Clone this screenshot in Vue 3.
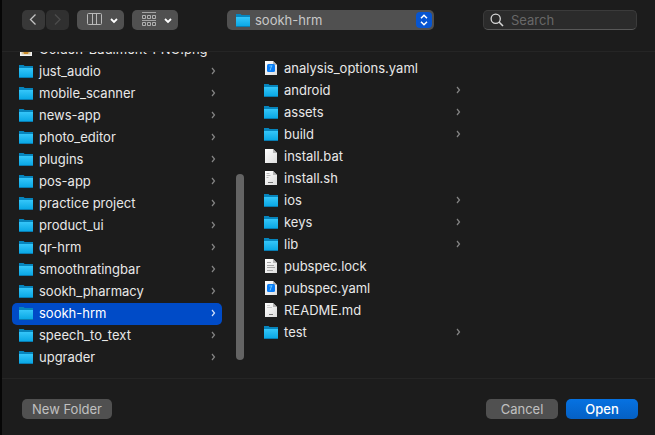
<script setup>
import { ref } from 'vue'

const selected = ref('sookh-hrm')
const query = ref('')
const location = ref('sookh-hrm')

const projects = [
  { name: 'Golden-Badiment-PNG.png', kind: 'image' },
  ...[
    'just_audio', 'mobile_scanner', 'news-app', 'photo_editor', 'plugins', 'pos-app',
    'practice project', 'product_ui', 'qr-hrm', 'smoothratingbar', 'sookh_pharmacy',
    'sookh-hrm', 'speech_to_text', 'upgrader'
  ].map((name) => ({ name, kind: 'folder' }))
]

const contents = [
  { name: 'analysis_options.yaml', kind: 'code' },
  { name: 'android', kind: 'folder' },
  { name: 'assets', kind: 'folder' },
  { name: 'build', kind: 'folder' },
  { name: 'install.bat', kind: 'blank' },
  { name: 'install.sh', kind: 'script' },
  { name: 'ios', kind: 'folder' },
  { name: 'keys', kind: 'folder' },
  { name: 'lib', kind: 'folder' },
  { name: 'pubspec.lock', kind: 'text' },
  { name: 'pubspec.yaml', kind: 'code' },
  { name: 'README.md', kind: 'readme' },
  { name: 'test', kind: 'folder' }
]

const columns = [
  { id: 'projects', label: 'Projects', items: projects },
  { id: 'contents', label: 'Folder contents', items: contents }
]
</script>

<template>
  <div class="dialog">
    <svg class="defs" aria-hidden="true">
      <defs>
        <linearGradient id="folder-face" x1="0" y1="0" x2="0" y2="1">
          <stop offset="0" stop-color="#35c6f9" />
          <stop offset="1" stop-color="#06a5e3" />
        </linearGradient>
        <linearGradient id="page-face" x1="0" y1="0" x2="1" y2="1">
          <stop offset="0" stop-color="#ffffff" />
          <stop offset="1" stop-color="#dcdcdc" />
        </linearGradient>
        <symbol id="icon-folder" viewBox="0 0 16 16">
          <path d="M1 2h4.600l1 1H15V15H1z" fill="#0685bd" />
          <path d="M1 5h14v10H1z" fill="url(#folder-face)" />
          <path d="M1 14h14v1H1z" fill="#087db2" />
        </symbol>
        <symbol id="icon-blank" viewBox="0 0 16 16">
          <path d="M2 1h8l4 4v10H2z" fill="url(#page-face)" />
          <path d="M10 1v4h4z" fill="#b4b4b4" />
        </symbol>
        <symbol id="icon-code" viewBox="0 0 16 16">
          <use href="#icon-blank" />
          <rect x="4" y="4" width="8" height="8" rx="1.500" fill="#087cf7" />
          <path d="M8.800 5.500 7 10.500M6.300 6h3" stroke="#65c4ff" fill="none" />
        </symbol>
        <symbol id="icon-script" viewBox="0 0 16 16">
          <use href="#icon-blank" />
          <path d="M3.500 3.500h3M3.500 5.500h4M3.500 7.500h2" stroke="#b8b8b8" fill="none" />
          <path d="M5 12.500h5" stroke="#777" fill="none" />
        </symbol>
        <symbol id="icon-text" viewBox="0 0 16 16">
          <use href="#icon-blank" />
          <path d="M4 4.500h4M4 7.500h7M4 9.500h8M4 12.500h6" stroke="#a6a6a6" fill="none" />
        </symbol>
        <symbol id="icon-readme" viewBox="0 0 16 16">
          <use href="#icon-blank" />
          <path d="M4 3.500h3M4 5.500h5" stroke="#cecece" fill="none" />
          <path d="M6 12.500h4" stroke="#777" fill="none" />
        </symbol>
        <symbol id="icon-image" viewBox="0 0 16 16">
          <path d="M2 2h12v13H2z" fill="#f2f2f2" />
          <path d="M3.500 4h9v9.500h-9z" fill="#d9c9a4" />
          <path d="M5 10h6l-1 3H6z" fill="#c98b2b" />
        </symbol>
      </defs>
    </svg>

    <header class="toolbar">
      <nav class="history" aria-label="History">
        <button type="button" aria-label="Back">
          <svg width="22" height="20" viewBox="0 0 22 20"><path d="M13.500 4.500 8.500 9.500l5 5" stroke="#c4c4c4" stroke-width="1.300" /></svg>
        </button>
        <button type="button" aria-label="Forward" disabled>
          <svg width="22" height="20" viewBox="0 0 22 20"><path d="m9 4.500 5 5-5 5" stroke="#4c4c4c" stroke-width="1.300" /></svg>
        </button>
      </nav>
      <button type="button" class="view" aria-label="Column view">
        <svg width="47" height="20" viewBox="0 0 47 20">
          <rect x="10.500" y="3.500" width="14" height="11" rx="1" stroke="#b9b9b9" />
          <path d="M15.500 3.500v11M19.500 3.500v11" stroke="#b9b9b9" />
          <path d="m34 9 3 3 3-3" stroke="#fff" stroke-width="1.800" />
        </svg>
      </button>
      <button type="button" class="view" aria-label="Group items">
        <svg width="46" height="20" viewBox="0 0 46 20">
          <path d="M10 2.500h14M10 10.500h14" stroke="#a4a4a4" />
          <path d="M10.500 5.500h3v3h-3zM15.500 5.500h3v3h-3zM20.500 5.500h3v3h-3zM10.500 12.500h3v3h-3zM15.500 12.500h3v3h-3zM20.500 12.500h3v3h-3z" stroke="#b0b0b0" />
          <path d="m33 9 3 3 3-3" stroke="#fff" stroke-width="1.800" />
        </svg>
      </button>
      <div class="location">
        <svg class="icon" viewBox="0 0 16 16"><use href="#icon-folder" /></svg>
        <select v-model="location" aria-label="Location">
          <option>sookh-hrm</option>
        </select>
        <svg class="stepper" width="16" height="16" viewBox="0 0 16 16">
          <path d="m5 6.300 3-3 3 3M5 9.700l3 3 3-3" stroke="#fff" stroke-width="1.500" />
        </svg>
      </div>
      <label class="search">
        <svg width="14" height="14" viewBox="0 0 14 14">
          <circle cx="5.700" cy="5.700" r="4.600" stroke="#d8d8d8" stroke-width="1.300" />
          <path d="m9 9 4 4" stroke="#d8d8d8" stroke-width="1.600" />
        </svg>
        <input v-model="query" type="text" placeholder="Search" aria-label="Search" />
      </label>
    </header>

    <main class="browser">
      <template v-for="column in columns" :key="column.id">
        <ul class="column" :class="column.id" :aria-label="column.label">
          <li v-for="item in column.items" :key="item.name">
            <button type="button" class="row" :class="{ selected: item.name === selected }" @click="selected = item.name">
              <svg class="icon" viewBox="0 0 16 16"><use :href="`#icon-${item.kind}`" /></svg>
              <span class="name">{{ item.name }}</span>
              <svg v-if="item.kind === 'folder'" class="chevron" width="5" height="8" viewBox="0 0 5 8">
                <path d="m1 1 2.500 3L1 7" stroke="currentColor" stroke-width="1.200" />
              </svg>
            </button>
          </li>
        </ul>
        <div v-if="column.id === 'projects'" class="track"><div class="thumb"></div></div>
      </template>
    </main>

    <footer class="actions">
      <button type="button" class="action new-folder">New Folder</button>
      <button type="button" class="action">Cancel</button>
      <button type="button" class="action primary">Open</button>
    </footer>
  </div>
</template>

<style>
body {
  background: #1c1c1c;
}
</style>

<style scoped>
.dialog {
  box-sizing: border-box;
  display: grid;
  grid-template-rows: 52px 1fr 57px;
  height: 100vh;
  border-left: 2px solid #060606;
  background: #1c1c1c;
  color: #e8e8e8;
  font: 400 13px/16px Inter, "Liberation Sans", sans-serif;
}

.defs {
  position: absolute;
  width: 0;
  height: 0;
}

svg {
  display: block;
  flex: none;
  fill: none;
}

.icon {
  width: 16px;
  height: 16px;
}

button,
input,
select {
  margin: 0;
  padding: 0;
  border: 0;
  font: inherit;
}

.toolbar {
  display: flex;
  align-items: flex-start;
  padding: 10px 18px 0 20px;
  border-bottom: 1px solid #252525;
}

.history {
  display: flex;
  gap: 1px;
}

.history button {
  width: 23px;
  height: 20px;
  border-radius: 5px;
  background: #383838;
}

.history button:disabled {
  background: #303030;
}

.view {
  height: 20px;
  margin-left: 8px;
  border-radius: 5px;
  background: #505050;
}

.location {
  display: flex;
  align-items: center;
  flex: 0 1 207px;
  box-sizing: border-box;
  height: 20px;
  margin: 0 auto;
  padding: 0 2px 0 8px;
  border-radius: 5px;
  background: #505050;
}

.location select {
  flex: 1;
  min-width: 0;
  height: 20px;
  padding-left: 4px;
  appearance: none;
  background: transparent;
  color: #c8c8c8;
}

.stepper {
  border-radius: 4px;
  background: #0755d1;
}

.search {
  display: flex;
  align-items: center;
  gap: 7px;
  flex: 0 1 154px;
  min-width: 0;
  box-sizing: border-box;
  height: 20px;
  padding: 0 6px;
  border: 1px solid #3b3b3b;
  border-bottom-color: #585858;
  border-radius: 5px;
  background: #2b2b2b;
}

.search input {
  flex: 1;
  width: 100%;
  min-width: 0;
  background: transparent;
  color: #e4e4e4;
  outline: none;
}

.search input::placeholder {
  color: #686868;
  opacity: 1;
}

.browser {
  display: grid;
  grid-template-columns: 210px 12px 1fr;
  min-height: 0;
  padding-left: 10px;
  overflow: hidden;
}

.column {
  margin: 0;
  padding: 0;
  list-style: none;
}

.projects {
  margin-top: -13px;
}

.contents {
  width: 210px;
  padding: 6px 0 0 23px;
}

.row {
  display: flex;
  align-items: center;
  box-sizing: border-box;
  width: 100%;
  height: 22px;
  padding: 0 6px 2px;
  border-radius: 5px;
  background: transparent;
  color: inherit;
  text-align: left;
}

.row.selected {
  background: #004bc7;
  color: #fff;
}

.name {
  flex: 1;
  padding-left: 5px;
  white-space: nowrap;
}

.chevron {
  color: #858585;
}

.selected .chevron {
  color: #d4e2fb;
}

.track {
  display: flex;
  align-items: flex-end;
  width: 8px;
  margin-left: 14px;
  padding-bottom: 18px;
}

.thumb {
  width: 8px;
  height: 186px;
  border-radius: 4px;
  background: #646464;
}

.actions {
  display: flex;
  align-items: flex-start;
  gap: 8px;
  padding: 20px 17px 0 20px;
  border-top: 1px solid #252525;
}

.action {
  width: 72px;
  height: 20px;
  border-radius: 5px;
  background: #505050;
  color: #c0c0c0;
}

.new-folder {
  width: 90px;
  margin-right: auto;
}

.primary {
  background: linear-gradient(#0672e2, #0560c4);
  color: #fff;
  font-weight: 500;
}
</style>
